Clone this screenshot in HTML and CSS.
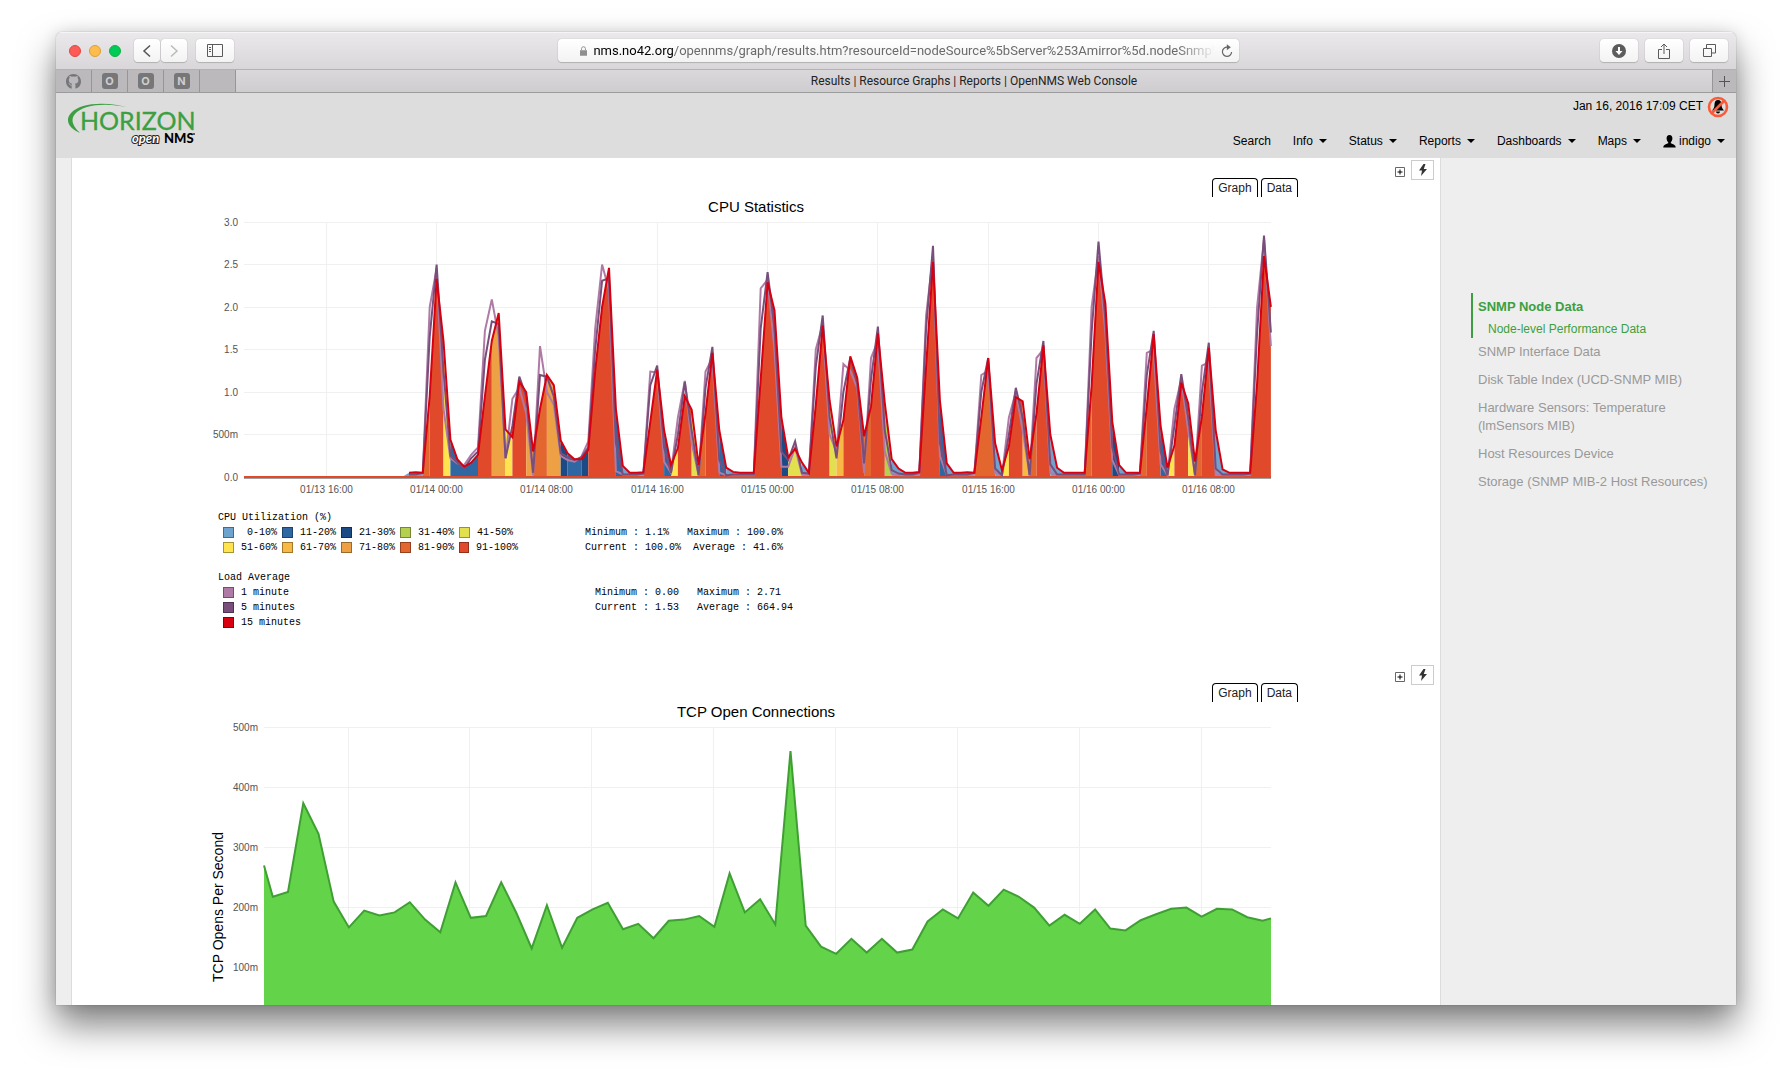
FILE: index.html
```html
<!DOCTYPE html>
<html lang="en">
<head>
<meta charset="utf-8">
<title>Results | Resource Graphs | Reports | OpenNMS Web Console</title>
<link rel="stylesheet" href="styles.css">
</head>
<body>
<div class="window">
  <div class="toolbar">
    <div class="controls">
      <div class="lights"><span class="light red"></span><span class="light amber"></span><span class="light green"></span></div>
      <div class="history">
        <button class="tool" aria-label="Back"><svg width="10" height="14" viewBox="0 0 10 14"><path d="M8 1.500L2 7l6 5.500" fill="none" stroke="#555" stroke-width="1.500"/></svg></button>
        <button class="tool" aria-label="Forward"><svg width="10" height="14" viewBox="0 0 10 14"><path d="M2 1.500L8 7l-6 5.500" fill="none" stroke="#bbb" stroke-width="1.500"/></svg></button>
      </div>
      <button class="tool" aria-label="Sidebar"><svg width="16" height="13" viewBox="0 0 16 13"><path d="M.5.5h15v12H.5zM5.500.5v12M2 3.500h2M2 5.500h2M2 7.500h2" fill="none" stroke="#5a5a5a"/></svg></button>
    </div>
    <div class="address">
      <svg width="7" height="10" viewBox="0 0 9 12"><path d="M0 5h9v7H0z" fill="#8e8e8e"/><path d="M2 5V3a2.500 2.500 0 0 1 5 0v2" fill="none" stroke="#8e8e8e" stroke-width="1.200"/></svg>
      <div class="url"><b>nms.no42.org</b>/opennms/graph/results.htm?resourceId=nodeSource%5bServer%253Amirror%5d.nodeSnmp%5b</div>
      <button class="reload" aria-label="Reload"><svg width="12" height="14" viewBox="0 0 12 14"><path d="M6.500 3.200A4.600 4.600 0 1 0 10.600 8" fill="none" stroke="#666" stroke-width="1.200"/><path d="M5.800.2l4 3-4 3z" fill="#666"/></svg></button>
    </div>
    <div class="actions">
      <button class="tool" aria-label="Downloads"><svg width="14" height="14" viewBox="0 0 14 14"><circle cx="7" cy="7" r="7" fill="#5c5c5c"/><path d="M7 3v5" stroke="#fff" stroke-width="2"/><path d="M3.500 7h7L7 11z" fill="#fff"/></svg></button>
      <button class="tool" aria-label="Share"><svg width="12" height="16" viewBox="0 0 12 16"><path d="M4 6.500H.5v9h11v-9H8M6 11V1.500M3 4l3-3 3 3" fill="none" stroke="#5a5a5a"/></svg></button>
      <button class="tool" aria-label="Tabs"><svg width="13" height="13" viewBox="0 0 13 13"><path d="M.5 4.500h8v8h-8zM3.500 4V.5h9v8.500H9" fill="none" stroke="#5a5a5a"/></svg></button>
    </div>
  </div>

  <div class="tabbar">
    <div class="pin"><svg width="15" height="15" viewBox="0 0 16 16"><path fill="#77767a" d="M8 0C3.580 0 0 3.580 0 8c0 3.540 2.290 6.530 5.470 7.590.4.070.55-.17.55-.38v-2.900c-.9.300-2.100-.3-2.500-1.300-.3-.6-.6-.9-1.200-1.300.9-.2 1.500.6 2 1.300.4.600 1.100.8 1.800.5.050-.6.300-1 .5-1.200-1.800-.2-3.640-.9-3.640-3.950 0-.9.300-1.600.82-2.150-.1-.2-.36-1 .08-2.120 0 0 .67-.2 2.200.82a7.500 7.500 0 0 1 4 0c1.530-1.030 2.200-.82 2.200-.82.440 1.100.16 1.920.08 2.120.5.560.82 1.270.82 2.150 0 3.070-1.870 3.750-3.650 3.950.3.250.54.730.54 1.480v3.300c0 .2.150.46.550.38A8 8 0 0 0 16 8c0-4.420-3.580-8-8-8z"/></svg></div>
    <div class="pin"><span class="badge">O</span></div>
    <div class="pin"><span class="badge">O</span></div>
    <div class="pin"><span class="badge">N</span></div>
    <div class="pin"></div>
    <div class="tab-title">Results | Resource Graphs | Reports | OpenNMS Web Console</div>
    <button class="new-tab" aria-label="New tab"><svg width="11" height="11" viewBox="0 0 11 11"><path d="M5.500 0v11M0 5.500h11" stroke="#555"/></svg></button>
  </div>

  <header class="header">
    <a class="logo" href="#" aria-label="Horizon OpenNMS">
      <svg width="132" height="48" viewBox="0 0 132 48">
        <path d="M67 7C43-1 15 0 5 11c-7 8-1 16 9 20C7 24 4 18 9 12 18 2 43 0 67 7z" fill="#3c9f41"/>
        <text class="logo-name" x="14" y="28">HORIZON</text>
        <text class="logo-open" x="66" y="41">open</text>
        <text class="logo-nms" x="98" y="41">NMS</text>
        <circle cx="128" cy="32" r="1" fill="#333"/>
      </svg>
    </a>
    <div class="header-right">
      <div class="clock"><span>Jan 16, 2016 17:09 CET</span>
        <svg width="22" height="22" viewBox="0 0 22 22"><path d="M11 4c-2.500 0-3.500 2-3.500 4.500 0 3-1 4.500-2.500 6h12c-1.500-1.500-2.500-3-2.500-6C14.500 6 13.500 4 11 4zM9 15.500h4a2 2 0 0 1-4 0z" fill="#000"/><circle cx="11" cy="11" r="9" fill="none" stroke="#fb5a38" stroke-width="2.600"/><path d="M17 5L5 17" stroke="#fb5a38" stroke-width="2.600"/></svg>
      </div>
      <nav class="nav">
        <a href="#">Search</a>
        <button>Info<i class="caret"></i></button>
        <button>Status<i class="caret"></i></button>
        <button>Reports<i class="caret"></i></button>
        <button>Dashboards<i class="caret"></i></button>
        <button>Maps<i class="caret"></i></button>
        <button><svg class="user" width="13" height="13" viewBox="0 0 13 13"><path d="M6.500 0C4.500 0 3.600 1.500 3.600 3.300c0 1.700.6 3.200 1.600 4v1C3 9.200.3 10 .3 12.500h12.400c0-2.500-2.700-3.300-4.900-4.200v-1c1-.8 1.600-2.300 1.600-4C9.400 1.500 8.500 0 6.500 0z"/></svg>indigo<i class="caret"></i></button>
      </nav>
    </div>
  </header>

  <div class="page">
    <main class="main">
      <section class="report">
        <div class="report-tools">
          <button class="expand" aria-label="Expand"><svg width="10" height="10" viewBox="0 0 10 10"><path d="M.5.5h9v9h-9z" fill="#fff" stroke="#666"/><path d="M5 2.500v5M2.500 5h5" stroke="#000"/></svg></button>
          <button class="bolt" aria-label="Forecast"><svg width="8" height="12" viewBox="0 0 8 12"><path d="M4.500 0L0 6.500h3L2 12l6-7H4.800L6.500 0z" fill="#333"/></svg></button>
        </div>
        <div class="graph">
          <div class="graph-tabs"><button>Graph</button><button>Data</button></div>
          <h2>CPU Statistics</h2>
          <svg class="plot" id="cpu" width="1084" height="285" viewBox="0 0 1084 285"></svg>
          <div class="legend">
            <div>CPU Utilization (%)</div>
            <div class="legend-row">
              <div class="keys">
                <span class="key"><i class="c0"></i> 0-10%</span><span class="key"><i class="c1"></i>11-20%</span><span class="key"><i class="c2"></i>21-30%</span><span class="key"><i class="c3"></i>31-40%</span><span class="key"><i class="c4"></i>41-50%</span>
                <span class="key"><i class="c5"></i>51-60%</span><span class="key"><i class="c6"></i>61-70%</span><span class="key"><i class="c7"></i>71-80%</span><span class="key"><i class="c8"></i>81-90%</span><span class="key"><i class="c9"></i>91-100%</span>
              </div>
              <pre>Minimum : 1.1%   Maximum : 100.0%
Current : 100.0%  Average : 41.6%</pre>
            </div>
            <div class="legend-next">Load Average</div>
            <div class="legend-row">
              <div class="keys load">
                <span class="key"><i class="m1"></i>1 minute</span><span class="key"><i class="m5"></i>5 minutes</span><span class="key"><i class="m15"></i>15 minutes</span>
              </div>
              <pre>Minimum : 0.00   Maximum : 2.71
Current : 1.53   Average : 664.94</pre>
            </div>
          </div>
        </div>
      </section>

      <section class="report">
        <div class="report-tools">
          <button class="expand" aria-label="Expand"><svg width="10" height="10" viewBox="0 0 10 10"><path d="M.5.5h9v9h-9z" fill="#fff" stroke="#666"/><path d="M5 2.500v5M2.500 5h5" stroke="#000"/></svg></button>
          <button class="bolt" aria-label="Forecast"><svg width="8" height="12" viewBox="0 0 8 12"><path d="M4.500 0L0 6.500h3L2 12l6-7H4.800L6.500 0z" fill="#333"/></svg></button>
        </div>
        <div class="graph">
          <div class="graph-tabs"><button>Graph</button><button>Data</button></div>
          <h2>TCP Open Connections</h2>
          <svg class="plot" id="tcp" width="1084" height="330" viewBox="0 0 1084 330"></svg>
        </div>
      </section>
    </main>

    <aside class="side">
      <ul>
        <li class="active"><a href="#">SNMP Node Data</a><a class="sub" href="#">Node-level Performance Data</a></li>
        <li><a href="#">SNMP Interface Data</a></li>
        <li><a href="#">Disk Table Index (UCD-SNMP MIB)</a></li>
        <li><a href="#">Hardware Sensors: Temperature (lmSensors MIB)</a></li>
        <li><a href="#">Host Resources Device</a></li>
        <li><a href="#">Storage (SNMP MIB-2 Host Resources)</a></li>
      </ul>
    </aside>
  </div>
</div>
<script src="charts.js"></script>
</body>
</html>
```
FILE: styles.css
```css
* { box-sizing: border-box; }
body {
  margin: 0;
  padding: 32px 56px 80px;
  height: 100vh;
  overflow: hidden;
  background: #fff;
  font-family: "Liberation Sans", Arial, sans-serif;
  font-size: 12px;
  color: #000;
}
button { margin: 0; padding: 0; border: 0; background: none; font: inherit; color: inherit; }
a { color: inherit; text-decoration: none; }
svg { display: block; flex: none; }

.window {
  display: flex;
  flex-direction: column;
  height: 100%;
  overflow: hidden;
  border-radius: 6px 6px 0 0;
  background: #eee;
  box-shadow: 0 0 1px rgba(0, 0, 0, .5), 0 20px 36px rgba(0, 0, 0, .5), 0 0 16px rgba(0, 0, 0, .12);
}

/* Browser toolbar */
.toolbar {
  display: grid;
  grid-template-columns: 1fr 41% 1fr;
  align-items: center;
  flex: none;
  height: 38px;
  padding: 0 8px 0 13px;
  border-bottom: 1px solid #b3b2b3;
  background: linear-gradient(#ebe9eb, #d9d6d9);
  box-shadow: inset 0 1px #f6f5f6;
}
.controls { display: flex; align-items: center; gap: 9px; }
.lights { display: flex; gap: 8px; width: 56px; }
.light { width: 12px; height: 12px; border-radius: 50%; }
.light.red { background: #fc5b57; border: 1px solid #e2463f; }
.light.amber { background: #fdbc4e; border: 1px solid #e0a02c; }
.light.green { background: #00cb57; border: 1px solid #10b043; }
.history { display: flex; gap: 1px; }
.tool {
  display: flex;
  align-items: center;
  justify-content: center;
  width: 38px;
  height: 23px;
  border-radius: 4px;
  background: linear-gradient(#fff, #f4f3f4);
  box-shadow: 0 0 1px #999, 0 1px 1px #b5b3b5;
}
.history .tool { width: 26px; }
.address {
  display: flex;
  align-items: center;
  gap: 6px;
  height: 23px;
  padding: 0 6px 0 22px;
  border-radius: 4px;
  background: linear-gradient(#fff, #f4f3f4);
  box-shadow: 0 0 1px #999, 0 1px 1px #b5b3b5;
}
.url {
  flex: 1;
  overflow: hidden;
  white-space: nowrap;
  font: 13px/20px Roboto, sans-serif;
  color: #6b6b6b;
  mask-image: linear-gradient(90deg, #000 94%, transparent);
}
.url b { font-weight: 400; color: #000; }
.actions { display: flex; justify-content: flex-end; gap: 7px; }

/* Tab bar */
.tabbar {
  display: flex;
  flex: none;
  height: 23px;
  border-bottom: 1px solid #9c9b9c;
  background: linear-gradient(#dad8da, #cfcdcf);
}
.pin {
  display: flex;
  align-items: center;
  justify-content: center;
  width: 36px;
  border-right: 1px solid #979697;
  background: #bbb9bb;
}
.badge {
  width: 16px;
  height: 16px;
  border-radius: 3px;
  background: #777678;
  color: #cfcdcf;
  font: bold 11px/16px Inter, sans-serif;
  text-align: center;
}
.tab-title { flex: 1; text-align: center; font: 12px/22px Roboto, sans-serif; color: #222; }
.new-tab {
  display: flex;
  align-items: center;
  justify-content: center;
  width: 24px;
  border-left: 1px solid #979697;
  background: #bbb9bb;
}

/* Site header */
.header {
  display: flex;
  justify-content: space-between;
  flex: none;
  height: 65px;
  padding: 0 11px 0 10px;
  background: #ddd;
}
.logo { padding-top: 9px; }
.logo-name { font: 25px Lato, sans-serif; fill: #3c9f41; stroke: #3c9f41; stroke-width: .3px; }
.logo-open { font: italic 700 13px Lato, sans-serif; fill: #fff; stroke: #222; stroke-width: 2px; paint-order: stroke; }
.logo-nms { font: 900 13px Lato, sans-serif; fill: #000; }
.header-right { display: flex; flex-direction: column; align-items: flex-end; justify-content: space-between; padding-bottom: 8px; }
.clock { display: flex; gap: 4px; padding-top: 3px; margin-right: -4px; line-height: 20px; }
.nav { display: flex; gap: 22px; line-height: 18px; }
.nav button { display: flex; align-items: center; }
.caret { margin-left: 6px; border: 4px solid transparent; border-top-color: #000; border-bottom: 0; }
.user { margin-right: 3px; }

/* Page body */
.page { display: flex; flex: 1; min-height: 0; padding-left: 15px; }
.main { flex: 1; overflow: hidden; border: 1px solid #dcdcdc; border-width: 0 1px; background: #fff; }
.side { width: 295px; padding: 135px 20px 0 30px; font-size: 13px; line-height: 18px; color: #999; }
.side ul { margin: 0; padding: 0; list-style: none; }
.side li { padding: 0 0 0 7px; }
.side a { display: block; padding: 5px 0; }
.side .active { padding-left: 5px; border-left: 2px solid #3c9f41; color: #3c9f41; font-weight: bold; }
.side .sub { padding: 0 0 0 10px; font-size: 12px; line-height: 17px; font-weight: normal; }

.report { min-height: 505px; padding-top: 2px; }
.report-tools { display: flex; justify-content: flex-end; align-items: center; gap: 6px; padding-right: 6px; }
.expand { padding-top: 3px; }
.bolt { display: flex; align-items: center; justify-content: center; width: 23px; height: 20px; border: 1px solid #ccc; background: #fff; }
.graph { width: 1084px; max-width: 100%; margin: -2px auto 0; }
.graph-tabs { display: flex; justify-content: flex-end; gap: 3px; }
.graph-tabs button {
  height: 19px;
  padding: 0 5px;
  border: 1px solid #000;
  border-bottom: 0;
  border-radius: 4px 4px 0 0;
  color: #222;
}
.graph h2 { margin: 0; text-align: center; font-size: 15px; font-weight: normal; line-height: 20px; }
.plot { overflow: visible; }
.tick { font-size: 10px; fill: #545454; }
.axis-title { font-size: 14px; fill: #000; }
.grid { fill: none; stroke: #f0f0f0; }

.legend { padding: 8px 0 0 4px; font: 10px/15px "Liberation Mono", monospace; }
.legend-row { display: flex; }
.legend-next { margin-top: 15px; }
.legend pre { margin: 0; font: inherit; }
.keys { display: grid; grid-template-columns: repeat(5, 59px); width: 367px; padding-left: 5px; }
.keys.load { grid-template-columns: 1fr; width: 377px; }
.key { display: flex; align-items: center; gap: 7px; white-space: pre; }
.key i { width: 11px; height: 11px; border: 1px solid rgba(0, 0, 0, .35); }
.c0 { background: #6fa3cf; }
.c1 { background: #2f67a3; }
.c2 { background: #1b4a84; }
.c3 { background: #b5cf4f; }
.c4 { background: #e3e04f; }
.c5 { background: #ffe44f; }
.c6 { background: #f7b844; }
.c7 { background: #eea144; }
.c8 { background: #e4662f; }
.c9 { background: #e04a2a; }
.m1 { background: #b07aa6; }
.m5 { background: #774f7a; }
.m15 { background: #d60010; }
```
FILE: charts.js
```js
const NS = 'http://www.w3.org/2000/svg';

function add(svg, name, attrs, text) {
  const el = document.createElementNS(NS, name);
  for (const key in attrs) el.setAttribute(key, attrs[key]);
  if (text) el.textContent = text;
  svg.appendChild(el);
  return el;
}
const join = pts => pts.map(p => p[0].toFixed(1) + ',' + p[1].toFixed(1)).join(' ');

function drawCpu() {
  const svg = document.getElementById('cpu');
  const left = 30, right = 1057, base = 260, unit = 85;
  const x = k => 222.6 + k * 6.895;
  const y = v => base - v * unit;
  const first = -5;

  ['0.0', '500m', '1.0', '1.5', '2.0', '2.5', '3.0'].forEach((label, i) => {
    const gy = Math.floor(y(i / 2)) + .5;
    add(svg, 'path', { class: 'grid', d: `M${left} ${gy}H${right}` });
    add(svg, 'text', { class: 'tick', x: 24, y: gy + 3.5, 'text-anchor': 'end' }, label);
  });
  ['01/13 16:00', '01/14 00:00', '01/14 08:00', '01/14 16:00', '01/15 00:00', '01/15 08:00', '01/15 16:00', '01/16 00:00', '01/16 08:00'].forEach((label, i) => {
    const gx = Math.floor(x(i * 16 - 16)) + .5;
    add(svg, 'path', { class: 'grid', d: `M${gx} 5V${base}` });
    add(svg, 'text', { class: 'tick', x: gx, y: 276, 'text-anchor': 'middle' }, label);
  });

  const load15 = [0, .05, .055, .05, .95, 2.33, 1.6, .44, .21, .12, .17, .26, .95, 1.6, 1.93, .56, .47, 1.12, 1, .3, .8, 1.2, 1.08, .43, .28, .21, .21, .32, 1.25, 2, 2.46, .8, .13, .05, .05, .055, .65, 1.26, .55, .14, .34, .95, .79, .14, .75, 1.46, .55, .11, .06, .05, .05, .05, 1.15, 2.29, 1.96, .7, .23, .33, .17, .05, .85, 1.78, .9, .36, .67, 1.42, 1.17, .48, .83, 1.69, .87, .21, .1, .05, .05, .06, 1.3, 2.53, .9, .16, .05, .05, .055, .05, .7, 1.4, .4, .08, .36, .94, .89, .21, .75, 1.55, .5, .11, .05, .05, .05, .05, 1.07, 2.53, 2.04, .65, .14, .05, .05, .05, .83, 1.68, .6, .11, .37, 1.11, .87, .18, .71, 1.52, .55, .09, .05, .05, .05, .05, 1.1, 2.6, 2];
  const load5 = [0, .03, .03, .05, 1.65, 2.5, 1.25, .25, .17, .1, .22, .3, 1.38, 1.83, 1.8, .22, .6, 1.18, .95, .05, 1.2, 1.18, .95, .28, .23, .2, .23, .35, 1.5, 2.31, 2.34, .4, .03, .03, .03, .04, 1.08, 1.31, .35, .05, .5, 1.12, .55, .02, 1.05, 1.53, .2, .02, .03, .03, .03, .03, 1.75, 2.41, 1.75, .3, .2, .42, .05, .04, 1.3, 1.9, .7, .22, 1, 1.4, 1.1, .16, 1.15, 1.77, .55, .08, .04, .03, .03, .05, 1.75, 2.72, .4, .02, .03, .03, .03, .05, 1, 1.4, .1, .02, .5, 1.05, .7, .02, 1.1, 1.6, .15, .03, .03, .03, .03, .03, 1.7, 2.77, 1.85, .35, .03, .03, .03, .04, 1.2, 1.72, .3, .02, .6, 1.21, .7, .02, 1, 1.58, .1, .03, .03, .03, .03, .04, 1.7, 2.84, 1.7];
  const load1 = [0, .04, .04, .04, 2, 2.45, .8, .22, .16, .14, .26, .35, 1.72, 2.09, 1.65, .22, .92, 1.05, .75, .02, 1.54, 1, .85, .25, .2, .18, .24, .42, 1.75, 2.5, 2.2, .07, .03, .03, .03, .04, 1.24, 1.23, .18, .05, .7, 1.13, .4, .02, 1.24, 1.4, .05, .02, .02, .02, .02, .02, 2.22, 2.32, 1.5, .12, .12, .35, .03, .03, 1.5, 1.8, .5, .3, 1.33, 1.25, 1.05, .05, 1.4, 1.6, .3, .04, .02, .02, .02, .04, 1.9, 2.6, .25, .02, .02, .02, .02, .04, 1.2, 1.25, .05, .02, .7, 1, .55, .02, 1.4, 1.5, .05, .02, .02, .02, .02, .02, 2, 2.6, 1.7, .2, .02, .02, .02, .03, 1.46, 1.5, .15, .02, .8, 1.15, .55, .02, 1.31, 1.35, .03, .02, .02, .02, .02, .03, 2, 2.8, 1.54];
  // CPU bucket of each half-hour interval
  const buckets = 'aaaijjfbbbbjjhhfjjhiihhcbbcjjjjbaaajjjbfjjeijjbaaaajjjjceeajjjegjjjijjdaaaajjjbaaaaiiiafjjgijjaaaaaijjjcaaaijjbfjjfijjaaaaajjj';
  const colors = { a: '#6fa3cf', b: '#2f67a3', c: '#1b4a84', d: '#b5cf4f', e: '#e3e04f', f: '#ffe44f', g: '#f7b844', h: '#eea144', i: '#e4662f', j: '#e04a2a' };
  const px = i => Math.min(x(first + i), right);

  // one polygon for each run of intervals in the same bucket
  for (let i = 0; i < buckets.length;) {
    let end = i + 1;
    while (end < buckets.length && buckets[end] === buckets[i]) end++;
    const pts = [[px(i), base]];
    for (let n = i; n <= end; n++) pts.push([px(n), y(load15[n])]);
    pts.push([px(end), base]);
    add(svg, 'polygon', { fill: colors[buckets[i]], points: join(pts) });
    i = end;
  }
  add(svg, 'path', { d: `M${left} 261H${right}`, stroke: '#444', 'stroke-width': 1 });
  add(svg, 'path', { d: `M${left} 260H${right}`, stroke: '#e04a2a', 'stroke-width': 2 });
  [[load1, '#b07aa6'], [load5, '#774f7a'], [load15, '#d60010']].forEach(([data, stroke]) => {
    const pts = data.map((v, i) => [px(i), y(v)]).slice(1);
    add(svg, 'polyline', { points: join(pts), fill: 'none', stroke, 'stroke-width': 2 });
  });
}

function drawTcp() {
  const svg = document.getElementById('tcp');
  const left = 50, right = 1057, base = 305;
  const y = v => base - v * .6;

  ['0.0', '100m', '200m', '300m', '400m', '500m'].forEach((label, i) => {
    const gy = y(i * 100) + .5;
    add(svg, 'path', { class: 'grid', d: `M${left} ${gy}H${right}` });
    if (i) add(svg, 'text', { class: 'tick', x: 44, y: gy + 3.5, 'text-anchor': 'end' }, label);
  });
  for (let i = 0; i < 8; i++) {
    add(svg, 'path', { class: 'grid', d: `M${Math.floor(134 + i * 121.9) + .5} 5V${base}` });
  }
  const opens = [269, 217, 225, 373, 322, 209, 166, 194, 186, 191, 208, 179, 158, 241, 182, 185, 241, 190, 131, 203, 132, 182, 196, 207, 163, 172, 148, 177, 179, 185, 167, 256, 191, 213, 171, 460, 169, 134, 122, 147, 124, 147, 124, 129, 176, 196, 181, 224, 202, 229, 217, 199, 169, 187, 172, 196, 164, 161, 178, 188, 197, 199, 184, 197, 196, 183, 177, 181];
  const pts = opens.map((v, i) => [i ? Math.min(58.8 + (i - 1) * 15.227, right) : left, y(v)]);
  add(svg, 'polygon', { fill: '#63d44a', points: join([[left, base], ...pts, [right, base]]) });
  add(svg, 'polyline', { fill: 'none', stroke: '#3f9f33', 'stroke-width': 2, points: join(pts) });
  add(svg, 'text', { class: 'axis-title', transform: 'translate(9 185) rotate(-90)', 'text-anchor': 'middle' }, 'TCP Opens Per Second');
}

drawCpu();
drawTcp();
```
